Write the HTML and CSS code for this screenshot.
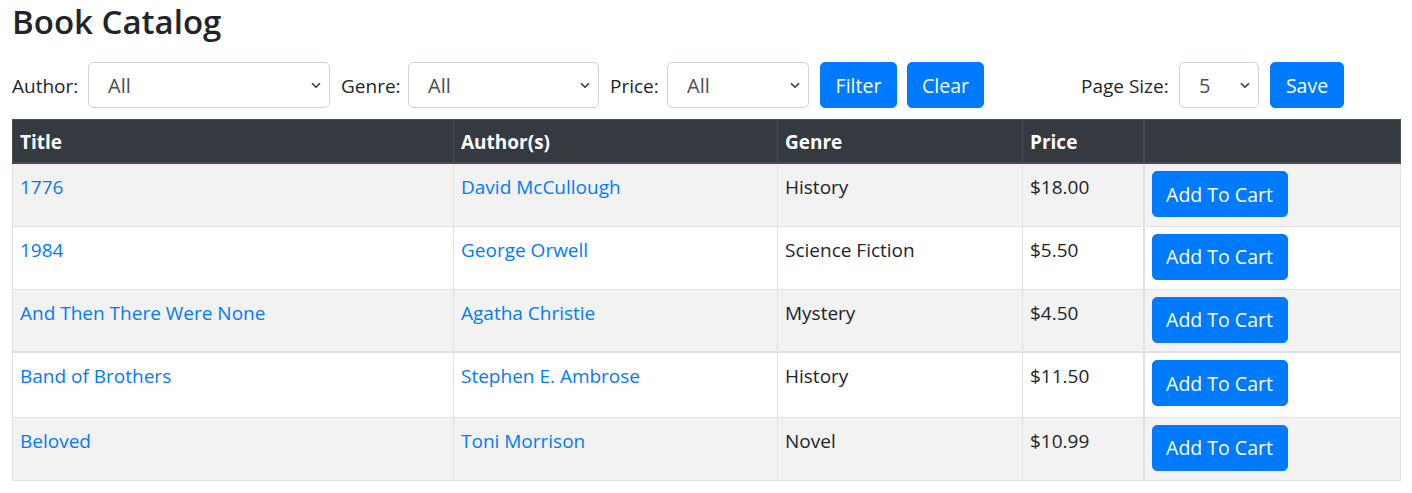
FILE: index.html
```html
<!DOCTYPE html>
<html lang="en">
<head>
<meta charset="utf-8">
<title>Book Catalog</title>
<link rel="stylesheet" href="styles.css">
</head>
<body>
<div class="page">
  <h3 class="title">Book Catalog</h3>
  <form class="filters">
    <label class="lbl l-author">Author:</label>
    <span class="sel-wrap w-author">
      <select class="sel"><option>All</option></select>
      <svg class="chev" width="10" height="7" viewBox="0 0 10 7"><path d="M1 1.2 L5 5.2 L9 1.2" fill="none" stroke="#343a40" stroke-width="1.6"/></svg>
    </span>
    <label class="lbl l-genre">Genre:</label>
    <span class="sel-wrap w-genre">
      <select class="sel"><option>All</option></select>
      <svg class="chev" width="10" height="7" viewBox="0 0 10 7"><path d="M1 1.2 L5 5.2 L9 1.2" fill="none" stroke="#343a40" stroke-width="1.6"/></svg>
    </span>
    <label class="lbl l-price">Price:</label>
    <span class="sel-wrap w-price">
      <select class="sel"><option>All</option></select>
      <svg class="chev" width="10" height="7" viewBox="0 0 10 7"><path d="M1 1.2 L5 5.2 L9 1.2" fill="none" stroke="#343a40" stroke-width="1.6"/></svg>
    </span>
    <button type="button" class="btn w-filter">Filter</button>
    <button type="button" class="btn w-clear">Clear</button>
    <label class="lbl l-page">Page Size:</label>
    <span class="sel-wrap w-size">
      <select class="sel"><option>5</option></select>
      <svg class="chev" width="10" height="7" viewBox="0 0 10 7"><path d="M1 1.2 L5 5.2 L9 1.2" fill="none" stroke="#343a40" stroke-width="1.6"/></svg>
    </span>
    <button type="button" class="btn w-save">Save</button>
  </form>
  <table class="books">
    <colgroup>
      <col class="c-title"><col class="c-author"><col class="c-genre"><col class="c-price"><col class="c-act">
    </colgroup>
    <thead>
      <tr><th>Title</th><th>Author(s)</th><th>Genre</th><th>Price</th><th class="act"></th></tr>
    </thead>
    <tbody>
      <tr class="odd"><td><a href="#">1776</a></td><td><a href="#">David McCullough</a></td><td>History</td><td>$18.00</td><td class="act"><button type="button" class="btn cart">Add To Cart</button></td></tr>
      <tr><td><a href="#">1984</a></td><td><a href="#">George Orwell</a></td><td>Science Fiction</td><td>$5.50</td><td class="act"><button type="button" class="btn cart">Add To Cart</button></td></tr>
      <tr class="odd"><td><a href="#">And Then There Were None</a></td><td><a href="#">Agatha Christie</a></td><td>Mystery</td><td>$4.50</td><td class="act"><button type="button" class="btn cart">Add To Cart</button></td></tr>
      <tr class="split"><td><a href="#">Band of Brothers</a></td><td><a href="#">Stephen E. Ambrose</a></td><td>History</td><td>$11.50</td><td class="act"><button type="button" class="btn cart">Add To Cart</button></td></tr>
      <tr class="odd"><td><a href="#">Beloved</a></td><td><a href="#">Toni Morrison</a></td><td>Novel</td><td>$10.99</td><td class="act"><button type="button" class="btn cart">Add To Cart</button></td></tr>
    </tbody>
  </table>
</div>
</body>
</html>
```
FILE: styles.css
```css
* { box-sizing: border-box; }
html, body { margin: 0; padding: 0; background: #fff; }
body {
  font-family: "Open Sans", "Noto Sans", "Liberation Sans", sans-serif;
  font-size: 19px;
  line-height: 30px;
  color: #212529;
}
.page { padding: 0 12px; }
.title {
  margin: 0 0 18px 0;
  font-size: 33px;
  font-weight: 600;
  line-height: 44px;
  height: 44px;
  color: #212529;
}
.filters {
  display: flex;
  align-items: center;
  height: 46px;
  margin: 0 0 11px 0;
}
.lbl { margin-right: 10px; white-space: nowrap; padding-top: 1px; }
.l-author { width: 66px; }
.l-genre { width: 57px; }
.l-price { width: 47px; }
.l-page { width: 88px; margin-left: 97px; }
.sel-wrap { position: relative; display: block; height: 46px; margin-right: 11px; }
.sel {
  -webkit-appearance: none;
  appearance: none;
  width: 100%;
  height: 46px;
  border: 1px solid #ced4da;
  border-radius: 5px;
  background: #fff;
  color: #495057;
  font-family: inherit;
  font-size: 20px;
  padding: 2px 0 0 19px;
  line-height: 30px;
}
.chev { position: absolute; right: 9px; top: 20px; pointer-events: none; }
.w-author { width: 242px; }
.w-genre { width: 191px; }
.w-price { width: 142px; }
.w-size { width: 80px; }
.btn {
  display: inline-block;
  height: 46px;
  border: 1px solid #007bff;
  border-radius: 5px;
  background: #007bff;
  color: #fff;
  font-family: inherit;
  font-size: 19.5px;
  line-height: 30px;
  padding: 1px 0 0;
  text-align: center;
  cursor: pointer;
}
.w-filter { width: 77px; margin-right: 10px; }
.w-clear { width: 77px; }
.w-save { width: 74px; }
.books {
  width: 1388px;
  border-collapse: collapse;
  table-layout: fixed;
  border: 1px solid #dee2e6;
}
.c-title { width: 441px; }
.c-author { width: 324px; }
.c-genre { width: 245px; }
.c-price { width: 121px; }
.c-act { width: 257px; }
.books th {
  background: #343a40;
  color: #fff;
  font-weight: 700;
  text-align: left;
  padding: 7px 7px 5px;
  line-height: 30px;
  border: 1px solid #454d55;
  border-bottom: 2px solid #454d55;
  vertical-align: bottom;
}
.books td {
  padding: 8px 7px 0;
  height: 63px;
  vertical-align: top;
  border: 1px solid #dee2e6;
}
.books th.act, .books td.act { border-left-width: 2px; }
.books td.act { padding: 7px 7px 0; }
.books tr.odd td { background: #f2f2f2; }
.books tr.split td { border-top: 2px solid #dee2e6; height: 65px; }
.books a { color: #007bff; text-decoration: none; }
.cart { width: 136px; }
```
